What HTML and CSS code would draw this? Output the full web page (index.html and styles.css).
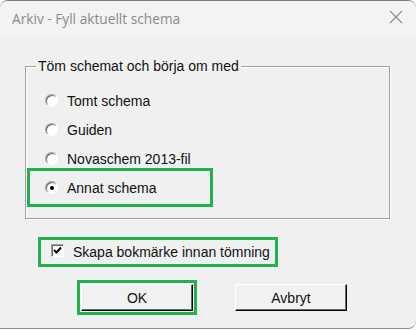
FILE: index.html
```html
<!DOCTYPE html>
<html lang="sv">
<head>
    <meta charset="UTF-8">
    <title>Arkiv - Fyll aktuellt schema</title>
    <link rel="stylesheet" href="styles.css">
</head>
<body>
    <div class="dialog">
        <div class="titlebar">
            <span class="title">Arkiv - Fyll aktuellt schema</span>
            <svg class="close" width="14" height="14" viewBox="0 0 14 14">
                <path d="M1 1 L13 13 M13 1 L1 13" stroke="#8a8a8a" stroke-width="1.1" fill="none"/>
            </svg>
        </div>
        <div class="content">
            <fieldset class="group">
                <legend>Töm schemat och börja om med</legend>
                <label class="row"><span class="radio"></span>Tomt schema</label>
                <label class="row"><span class="radio"></span>Guiden</label>
                <label class="row"><span class="radio"></span>Novaschem 2013-fil</label>
                <label class="row mark"><span class="radio on"></span>Annat schema</label>
            </fieldset>
            <label class="check-row mark">
                <span class="check">
                    <svg width="11" height="11" viewBox="0 0 11 11">
                        <path d="M2 5 L4.5 7.5 L9 2.5" stroke="#000" stroke-width="2" fill="none"/>
                    </svg>
                </span>
                Skapa bokmärke innan tömning
            </label>
            <div class="buttons">
                <button class="btn mark-btn">OK</button>
                <button class="btn">Avbryt</button>
            </div>
        </div>
    </div>
</body>
</html>
```

FILE: styles.css
```css
*{
    margin: 0;
    padding: 0;
    box-sizing: border-box;
}
body{
    background: #fbfbfb;
    font-family: "Liberation Sans", Arial, sans-serif;
    font-size: 14px;
    color: #111;
}
.dialog{
    width: 416px;
    height: 329px;
    background: #f0f0f0;
    border-top: 1px solid #7c7c7c;
    border-bottom: 1px solid #8c8c8c;
    border-radius: 8px 8px 8px 0;
    overflow: hidden;
}
.titlebar{
    height: 34px;
    background: #f3f3f3;
    display: flex;
    align-items: center;
    justify-content: space-between;
    padding: 0 12px 0 12px;
}
.title{
    font-family: "Open Sans", "Noto Sans", sans-serif;
    font-size: 13.7px;
    color: #8a8a8a;
}
.close{
    margin-right: 1px;
    margin-top: -2px;
}
.content{
    padding-top: 23px;
}
.group{
    margin-left: 25px;
    width: 365px;
    border: 1px solid #a0a0a0;
    box-shadow: inset 1px 1px 0 #fff, 1px 1px 0 #fff;
    padding: 12px 0 16px 6px;
    min-inline-size: 0;
}
.group legend{
    margin-left: 4px;
    padding: 0 2px;
    line-height: 16px;
}
.row{
    display: flex;
    align-items: center;
    gap: 9px;
    width: 176px;
    height: 29px;
    padding-left: 13px;
}
.mark{
    outline: 3px solid #22b14c;
    outline-offset: 2px;
}
.radio{
    width: 13px;
    height: 13px;
    border-radius: 50%;
    background: #fff;
    border: 1px solid;
    border-color: #a0a0a0 #fff #fff #a0a0a0;
    box-shadow: inset 1px 1px 0 #696969;
    display: flex;
    align-items: center;
    justify-content: center;
}
.radio.on::after{
    content: "";
    width: 4px;
    height: 4px;
    border-radius: 50%;
    background: #000;
}
.check-row{
    display: flex;
    align-items: center;
    gap: 9px;
    width: 234px;
    height: 24px;
    margin: 21px 0 0 41px;
    padding-left: 10px;
    outline-offset: 0;
}
.check{
    width: 13px;
    height: 13px;
    margin-top: -3px;
    background: #fff;
    border: 1px solid;
    border-color: #a0a0a0 #fff #fff #a0a0a0;
    box-shadow: inset 1px 1px 0 #696969;
    display: flex;
    align-items: center;
    justify-content: center;
}
.buttons{
    display: flex;
    gap: 42px;
    padding-left: 81px;
    margin-top: 20px;
}
.btn{
    width: 112px;
    height: 27px;
    font-family: "Liberation Sans", Arial, sans-serif;
    font-size: 14px;
    color: #111;
    background: #f1f1f1;
    border: 1px solid;
    border-color: #fff #000 #000 #fff;
    box-shadow: inset -1px -1px 0 #6a6a6a;
}
.mark-btn{
    outline: 3px solid #22b14c;
    outline-offset: 1px;
}
```
